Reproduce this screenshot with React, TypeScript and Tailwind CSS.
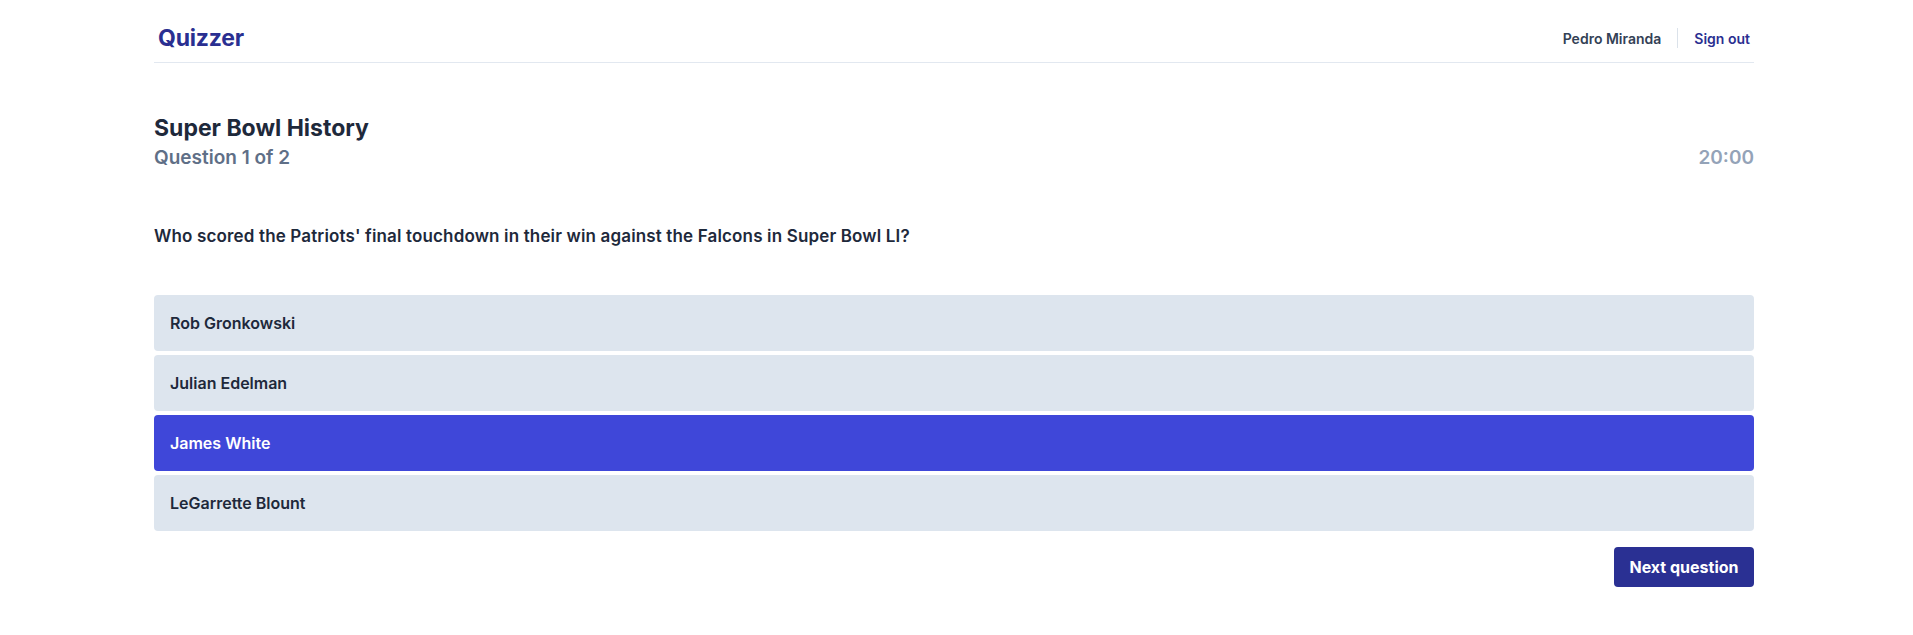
import React from "react";

const options = ["Rob Gronkowski", "Julian Edelman", "James White", "LeGarrette Blount"];

export default function App() {
  return (
    <div className="min-h-screen bg-white" style={{ fontFamily: "Inter, 'Noto Sans', sans-serif" }}>
      <div className="ml-[154px] w-[1600px]">
        <header className="flex h-[63px] items-center justify-between border-b border-[#e2e8f0] pt-[14px]">
          <div className="pl-[4px] text-[23px] font-bold text-[#2a2f91] tracking-[-0.2px]">Quizzer</div>
          <div className="flex items-center">
            <span className="text-[14px] font-semibold text-[#334155]">Pedro Miranda</span>
            <span className="mx-[16px] h-[20px] w-px bg-[#dbe2ea]" />
            <span className="pr-[4px] text-[14px] font-semibold text-[#2a2f91]">Sign out</span>
          </div>
        </header>
        <div className="mt-[49px] flex items-end justify-between">
          <div>
            <h1 className="text-[23px] font-bold leading-[32px] text-[#1e293b]">Super Bowl History</h1>
            <div className="text-[19px] font-semibold leading-[28px] text-[#5f6f87]">Question 1 of 2</div>
          </div>
          <div className="text-[19px] font-semibold leading-[28px] text-[#94a3b8]">20:00</div>
        </div>
        <p className="mt-[52px] text-[17px] font-semibold leading-[24px] tracking-[0.15px] text-[#1e293b]">
          Who scored the Patriots' final touchdown in their win against the Falcons in Super Bowl LI?
        </p>
        <div className="mt-[47px] flex flex-col gap-[4px]">
          {options.map((o) => {
            const sel = o === "James White";
            return (
              <div
                key={o}
                className={
                  sel
                    ? "flex h-[56px] items-center rounded-[4px] bg-[#3f47d9] px-[16px] text-[16px] font-semibold text-white"
                    : "flex h-[56px] items-center rounded-[4px] bg-[#dde5ee] px-[16px] text-[16px] font-semibold text-[#1e293b]"
                }
              >
                {o}
              </div>
            );
          })}
        </div>
        <div className="mt-[16px] flex justify-end">
          <button className="h-[40px] w-[140px] rounded-[4px] bg-[#2a3093] text-[16px] font-bold text-white">
            Next question
          </button>
        </div>
      </div>
    </div>
  );
}
